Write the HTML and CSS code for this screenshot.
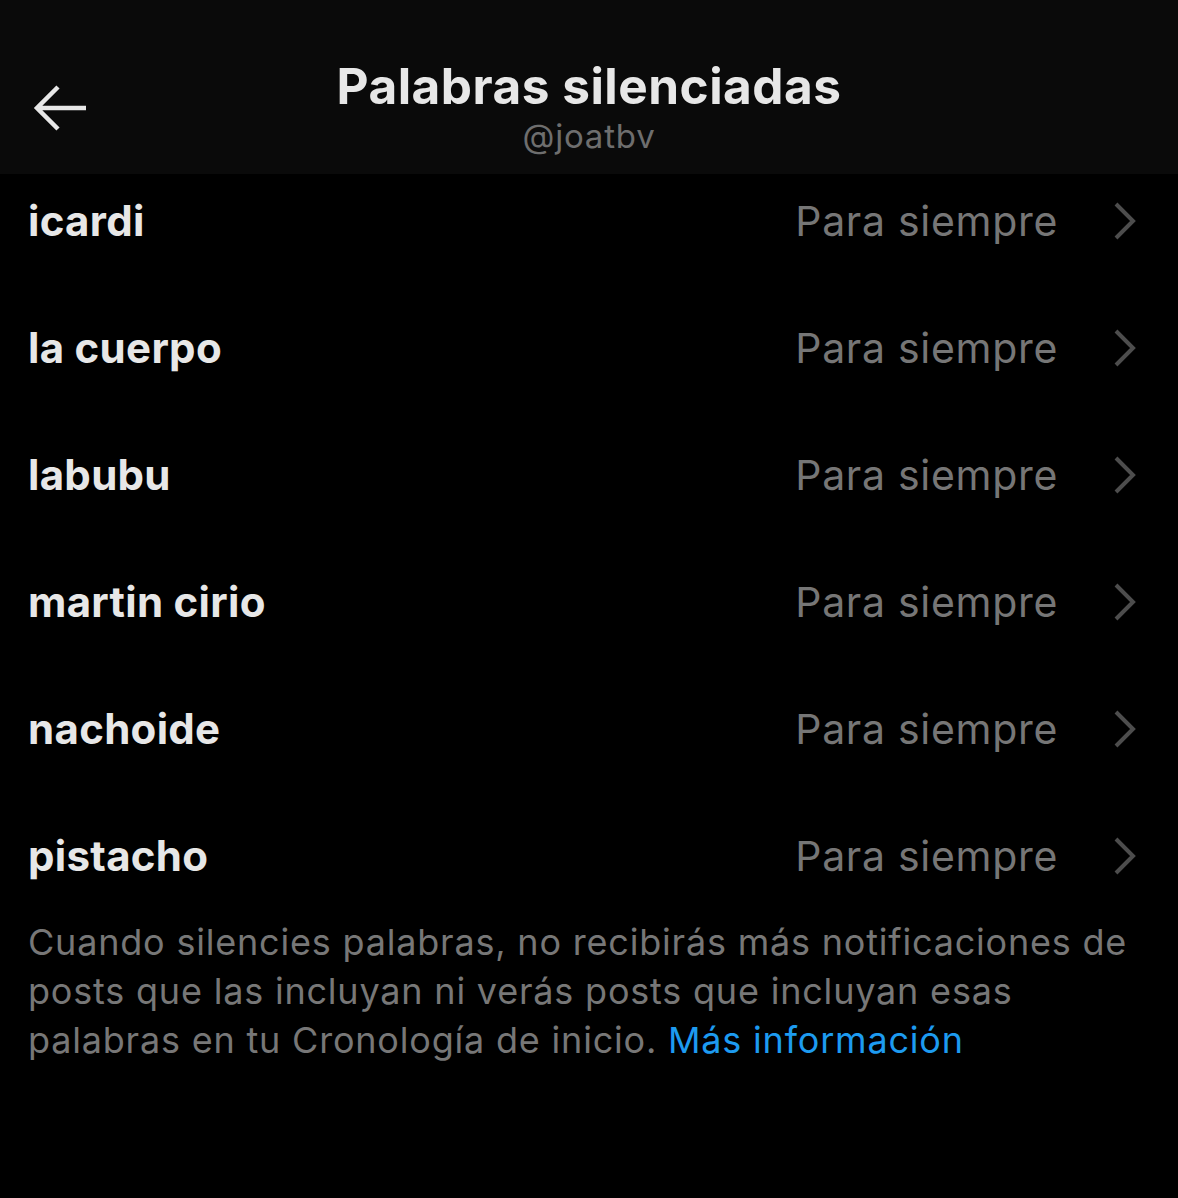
FILE: index.html
```html
<!DOCTYPE html>
<html lang="es">
<head>
<meta charset="utf-8">
<title>Palabras silenciadas</title>
<link rel="stylesheet" href="styles.css">
</head>
<body>
<header class="topbar">
  <button class="back" aria-label="Atrás">
    <svg width="56" height="48" viewBox="0 0 56 48"><path d="M54 24H6M26 3L5 24l21 21" fill="none" stroke="#e7e7e7" stroke-width="4.5" stroke-linecap="butt" stroke-linejoin="miter"/></svg>
  </button>
  <div class="titles">
    <h1 class="title">Palabras silenciadas</h1>
    <div class="handle">@joatbv</div>
  </div>
</header>
<main>
  <ul class="words">
    <li class="row"><span class="word">icardi</span><span class="dur">Para siempre</span><svg class="chev" width="24" height="38" viewBox="0 0 24 38"><path d="M3 2l17 17L3 36" fill="none" stroke="#4d4d4d" stroke-width="4"/></svg></li>
    <li class="row"><span class="word">la cuerpo</span><span class="dur">Para siempre</span><svg class="chev" width="24" height="38" viewBox="0 0 24 38"><path d="M3 2l17 17L3 36" fill="none" stroke="#4d4d4d" stroke-width="4"/></svg></li>
    <li class="row"><span class="word">labubu</span><span class="dur">Para siempre</span><svg class="chev" width="24" height="38" viewBox="0 0 24 38"><path d="M3 2l17 17L3 36" fill="none" stroke="#4d4d4d" stroke-width="4"/></svg></li>
    <li class="row"><span class="word">martin cirio</span><span class="dur">Para siempre</span><svg class="chev" width="24" height="38" viewBox="0 0 24 38"><path d="M3 2l17 17L3 36" fill="none" stroke="#4d4d4d" stroke-width="4"/></svg></li>
    <li class="row"><span class="word">nachoide</span><span class="dur">Para siempre</span><svg class="chev" width="24" height="38" viewBox="0 0 24 38"><path d="M3 2l17 17L3 36" fill="none" stroke="#4d4d4d" stroke-width="4"/></svg></li>
    <li class="row"><span class="word">pistacho</span><span class="dur">Para siempre</span><svg class="chev" width="24" height="38" viewBox="0 0 24 38"><path d="M3 2l17 17L3 36" fill="none" stroke="#4d4d4d" stroke-width="4"/></svg></li>
  </ul>
  <p class="note">Cuando silencies palabras, no recibirás más notificaciones de posts que las incluyan ni verás posts que incluyan esas palabras en tu Cronología de inicio. <a class="link" href="#">Más información</a></p>
</main>
</body>
</html>
```

FILE: styles.css
```css
html, body {
  margin: 0;
  padding: 0;
  background: #000;
}
body {
  width: 1178px;
  height: 1198px;
  overflow: hidden;
  font-family: Inter, Roboto, "Liberation Sans", sans-serif;
  color: #e7e7e7;
}
.topbar {
  height: 174px;
  background: #0a0a0a;
  display: flex;
  align-items: flex-start;
  position: relative;
}
.back {
  background: none;
  border: 0;
  padding: 0;
  margin: 84px 0 0 32px;
  width: 56px;
  height: 48px;
  display: flex;
}
.titles {
  flex: 1;
  display: flex;
  flex-direction: column;
  align-items: center;
  margin-left: -88px;
  padding-top: 56px;
}
.title {
  margin: 0;
  font-size: 49.5px;
  line-height: 60px;
  font-weight: 700;
  letter-spacing: 0.5px;
  color: #e7e7e7;
}
.handle {
  font-size: 33px;
  line-height: 40px;
  letter-spacing: 0.8px;
  color: #6e6e6e;
}
.words {
  list-style: none;
  margin: 0;
  padding: 21px 0 0 0;
  display: flex;
  flex-direction: column;
  gap: 75px;
}
.row {
  height: 52px;
  display: flex;
  align-items: center;
  padding: 0 41px 0 28px;
}
.word {
  flex: 1;
  font-size: 42px;
  line-height: 52px;
  font-weight: 700;
  letter-spacing: 0.3px;
  color: #e7e7e7;
}
.dur {
  font-size: 41px;
  line-height: 52px;
  letter-spacing: 0.7px;
  color: #767676;
}
.chev {
  margin-left: 55px;
  margin-top: 0;
}
.note {
  margin: 36px 0 0 0;
  padding: 0 40px 0 28px;
  font-size: 36px;
  line-height: 49px;
  letter-spacing: 0.8px;
  color: #777;
}
.link {
  color: #1d9bf0;
  text-decoration: none;
}
```
